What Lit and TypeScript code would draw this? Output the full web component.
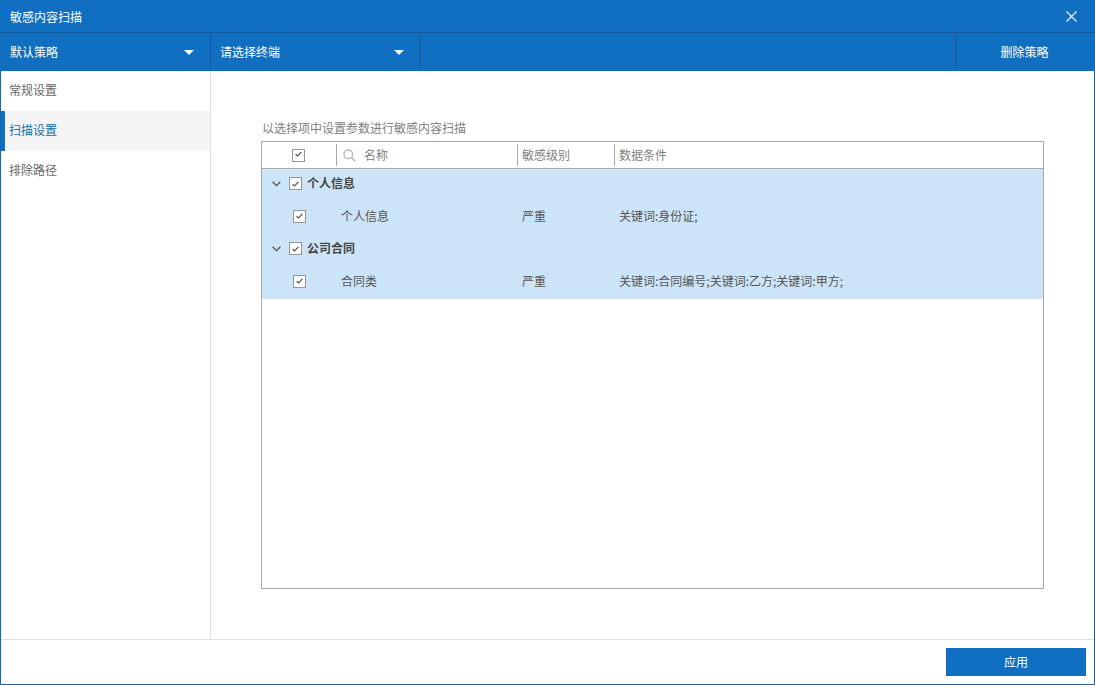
import { LitElement, html, css, svg } from 'lit';
import { customElement } from 'lit/decorators.js';

const groups = [
  {
    name: '个人信息',
    rows: [{ name: '个人信息', level: '严重', cond: '关键词:身份证;' }]
  },
  {
    name: '公司合同',
    rows: [{ name: '合同类', level: '严重', cond: '关键词:合同编号;关键词:乙方;关键词:甲方;' }]
  }
];

const nav = ['常规设置', '扫描设置', '排除路径'];

const check = html`<span class="check"
  ><svg width="7" height="6" viewBox="0 0 7 6">
    ${svg`<path d="M0.6 3.2 L2.5 5 L6.4 0.8" fill="none" stroke="#444" stroke-width="1.1" />`}
  </svg></span
>`;

@customElement('app-root')
export class AppRoot extends LitElement {
  static styles = css`
    :host {
      display: block;
      width: 1095px;
      height: 685px;
      font-family: 'Noto Sans CJK SC', 'Liberation Sans', sans-serif;
      font-size: 12px;
      color: #666;
    }

    .window {
      box-sizing: border-box;
      width: 100%;
      height: 100%;
      display: flex;
      flex-direction: column;
      border: 1px solid #116aae;
      border-top: none;
      background: #fff;
    }

    .title {
      flex: none;
      height: 32px;
      margin: 0 -1px;
      display: flex;
      align-items: center;
      justify-content: space-between;
      padding: 0 18px 0 10px;
      background: #106fc0;
      border-bottom: 1px solid #175a9c;
      color: #fff;
    }

    .toolbar {
      flex: none;
      height: 38px;
      margin: 0 -1px;
      display: flex;
      background: #106fc0;
      color: #fff;
    }

    .select {
      box-sizing: border-box;
      display: flex;
      align-items: center;
      justify-content: space-between;
      border-right: 1px solid #175a9c;
      padding: 0 16px 0 10px;
      width: 211px;
    }

    .select + .select {
      width: 210px;
      padding-left: 9px;
    }

    .select span {
      padding-bottom: 2px;
    }

    .arrow {
      width: 0;
      height: 0;
      border-left: 5px solid transparent;
      border-right: 5px solid transparent;
      border-top: 5px solid #fff;
    }

    .spacer {
      flex: 1;
      border-right: 1px solid #175a9c;
    }

    .delete {
      box-sizing: border-box;
      width: 139px;
      display: flex;
      align-items: center;
      justify-content: center;
      padding: 0 2px 2px 0;
    }

    .body {
      flex: 1;
      min-height: 0;
      display: flex;
    }

    .side {
      flex: none;
      width: 209px;
      border-right: 1px solid #e0e0e0;
    }

    .nav {
      box-sizing: border-box;
      height: 40px;
      display: flex;
      align-items: center;
      padding: 0 0 4px 8px;
      color: #666;
    }

    .nav.active {
      background: #f5f5f5;
      border-left: 4px solid #106fc0;
      padding-left: 4px;
      color: #106fa8;
    }

    .main {
      flex: 1;
      min-width: 0;
      padding: 48px 50px 50px;
      display: flex;
      flex-direction: column;
    }

    .hint {
      height: 22px;
      line-height: 17px;
      padding-left: 1px;
      color: #808080;
    }

    .table {
      box-sizing: border-box;
      flex: 1;
      width: 783px;
      border: 1px solid #a8a8a8;
    }

    .cols {
      display: grid;
      grid-template-columns: 74px 181px 97px 1fr;
    }

    .head {
      height: 26px;
      border-bottom: 1px solid #a8a8a8;
      align-items: center;
      color: #808080;
    }

    .head > div {
      box-sizing: border-box;
      height: 22px;
      display: flex;
      align-items: center;
    }

    .head > div + div {
      border-left: 1px solid #a8a8a8;
    }

    .head span {
      padding-bottom: 2px;
    }

    .head-check {
      padding-left: 30px;
    }

    .head-name {
      padding-left: 6px;
      gap: 8px;
    }

    .head-level,
    .head-cond {
      padding-left: 4px;
    }

    .band {
      background: #cce4f7;
    }

    .group {
      height: 29px;
      display: flex;
      align-items: center;
      padding-left: 10px;
      font-weight: 700;
      color: #444;
    }

    .group span.label {
      padding-bottom: 2px;
    }

    .group svg.chev {
      margin-right: 8px;
    }

    .group .check {
      margin-right: 5px;
    }

    .row {
      height: 36px;
      align-items: center;
      color: #555;
    }

    .row-check {
      padding-left: 31px;
      display: flex;
    }

    .row-name,
    .row-level,
    .row-cond {
      padding: 0 0 2px 5px;
    }

    .check {
      box-sizing: border-box;
      width: 13px;
      height: 13px;
      flex: none;
      display: inline-flex;
      align-items: center;
      justify-content: center;
      background: #fff;
      border: 1px solid #969696;
    }

    .footer {
      flex: none;
      height: 45px;
      box-sizing: border-box;
      border-top: 1px solid #e0e0e0;
      display: flex;
      justify-content: flex-end;
      align-items: flex-start;
      padding: 8px 8px 0 0;
    }

    .apply {
      box-sizing: border-box;
      width: 140px;
      height: 28px;
      display: flex;
      align-items: center;
      justify-content: center;
      padding-bottom: 2px;
      background: #106fc0;
      color: #fff;
    }
  `;

  render() {
    return html`
      <div class="window">
        <div class="title">
          <span>敏感内容扫描</span>
          <svg width="11" height="11" viewBox="0 0 11 11">
            <path d="M0.5 0.5 L10.5 10.5 M10.5 0.5 L0.5 10.5" stroke="#fff" stroke-width="1.1" />
          </svg>
        </div>
        <div class="toolbar">
          <div class="select"><span>默认策略</span><i class="arrow"></i></div>
          <div class="select"><span>请选择终端</span><i class="arrow"></i></div>
          <div class="spacer"></div>
          <div class="delete">删除策略</div>
        </div>
        <div class="body">
          <div class="side">
            ${nav.map(
              (n, i) => html`<div class="nav ${i === 1 ? 'active' : ''}">${n}</div>`
            )}
          </div>
          <div class="main">
            <div class="hint">以选择项中设置参数进行敏感内容扫描</div>
            <div class="table">
              <div class="cols head">
                <div class="head-check">${check}</div>
                <div class="head-name">
                  <svg width="13" height="13" viewBox="0 0 13 13">
                    <circle cx="5.3" cy="5.3" r="4.3" fill="none" stroke="#b4b4b4" stroke-width="1.3" />
                    <path d="M8.5 8.5 L12.3 12.3" stroke="#b4b4b4" stroke-width="1.6" />
                  </svg>
                  <span>名称</span>
                </div>
                <div class="head-level"><span>敏感级别</span></div>
                <div class="head-cond"><span>数据条件</span></div>
              </div>
              <div class="band">
                ${groups.map(
                  (g) => html`
                    <div class="group">
                      <svg class="chev" width="9" height="6" viewBox="0 0 9 6">
                        <path d="M0.6 0.7 L4.5 4.6 L8.4 0.7" fill="none" stroke="#555" stroke-width="1.3" />
                      </svg>
                      ${check}<span class="label">${g.name}</span>
                    </div>
                    ${g.rows.map(
                      (r) => html`
                        <div class="cols row">
                          <div class="row-check">${check}</div>
                          <div class="row-name">${r.name}</div>
                          <div class="row-level">${r.level}</div>
                          <div class="row-cond">${r.cond}</div>
                        </div>
                      `
                    )}
                  `
                )}
              </div>
            </div>
          </div>
        </div>
        <div class="footer"><div class="apply">应用</div></div>
      </div>
    `;
  }
}
